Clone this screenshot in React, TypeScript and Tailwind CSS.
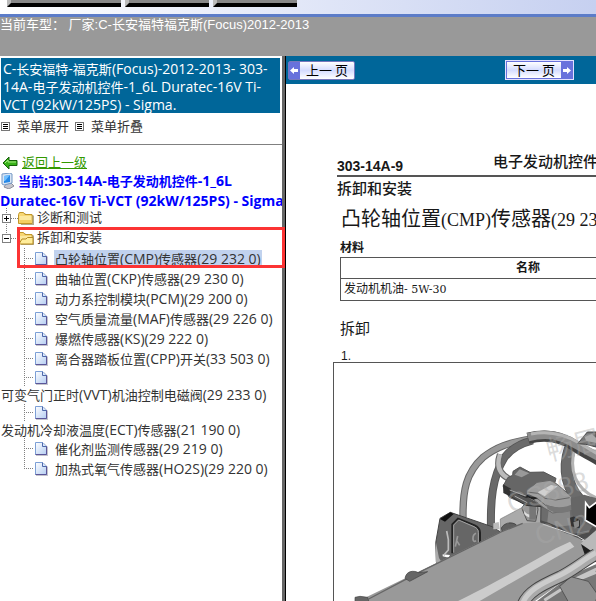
import React from "react";

const pageFont = "font-['Open_Sans','Noto_Sans_CJK_SC',sans-serif]";

/* Sets the Latin runs of a Chinese label in their own size. */
function Mixed({ text, latin = "text-[14px]" }: { text: string; latin?: string }) {
  return (
    <span>
      {text.split(/([ -~]+)/).map((run, i) =>
        i % 2 === 1 ? (
          <span key={i} className={latin}>
            {run}
          </span>
        ) : (
          run
        ),
      )}
    </span>
  );
}

function PageIcon() {
  return (
    <svg width="16" height="16" viewBox="0 0 16 16" className="shrink-0" aria-hidden="true">
      <defs>
        <linearGradient id="paper" x1="0" y1="0" x2="1" y2="1">
          <stop offset="0" stopColor="#ffffff" />
          <stop offset="1" stopColor="#b4cdf2" />
        </linearGradient>
      </defs>
      <path d="M2 3h8l4 4v9H2z" fill="#c4c4cc" />
      <path d="M1.500 2.500h7l4 4v8h-11z" fill="url(#paper)" stroke="#7c9fd6" />
      <path d="M1.500 14.500h11V6" fill="none" stroke="#5a5598" />
      <path d="M8.500 2.500v4h4" fill="#dbe8fb" stroke="#4e69aa" />
    </svg>
  );
}

function FolderIcon({ open = false }: { open?: boolean }) {
  return (
    <svg width="16" height="16" viewBox="0 0 16 16" className="shrink-0" aria-hidden="true">
      <path d="M2 5l1-2h4l1.500 2H15l1 1v9H3z" fill="#b5aa8a" />
      <path d="M.5 13.500v-9l1-2h4l1.500 2h7v9z" fill="#f7d774" stroke="#c29728" />
      <path d="M1.500 6h12v7h-12z" fill="#fce9a0" />
      {open ? (
        <path d="M1 14L4 9h4l1.500-1.500H15V14z" fill="#ffed9b" stroke="#b58a20" />
      ) : (
        <path d="M1.500 10h12v3h-12z" fill="#f4cf63" />
      )}
    </svg>
  );
}

function ListIcon() {
  return (
    <svg width="9" height="9" viewBox="0 0 9 9" className="shrink-0" aria-hidden="true" shapeRendering="crispEdges">
      <path d="M.5.5h8v8h-8z" fill="#fff" stroke="#777" />
      <path d="M2 2.500h5M2 4.500h5M2 6.500h5" stroke="#000" />
    </svg>
  );
}

function Expander({ open }: { open?: boolean }) {
  return (
    <svg width="18" height="20" viewBox="0 0 18 20" className="shrink-0" aria-hidden="true" shapeRendering="crispEdges">
      <path d={open ? "M6.500 0v6" : "M6.500 0v20"} stroke="#808080" strokeDasharray="1 1" />
      <path d="M11 10.500h7" stroke="#808080" strokeDasharray="1 1" />
      <path d="M2.500 6.500h8v8h-8z" fill="#fff" stroke="#808080" />
      <path d={open ? "M4 10.500h5" : "M4 10.500h5M6.500 8v5"} stroke="#000" />
    </svg>
  );
}

function Branch({ last = false }: { last?: boolean }) {
  return (
    <svg width="10" height="20" viewBox="0 0 10 20" className="ml-6 shrink-0" aria-hidden="true" shapeRendering="crispEdges">
      <path d={last ? "M.5 0v10" : "M.5 0v20"} stroke="#808080" strokeDasharray="1 1" />
      <path d="M0 10.500h10" stroke="#808080" strokeDasharray="1 1" />
    </svg>
  );
}

function Leaf({ label, selected, last }: { label: string; selected?: boolean; last?: boolean }) {
  return (
    <li className="flex h-5 items-center">
      <Branch last={last} />
      <PageIcon />
      <a
        href="#"
        className={selected ? "ml-1 h-[17px] bg-[#c1d2ee] px-px leading-[17px]" : "ml-1 h-[17px] px-px leading-[17px]"}
      >
        <Mixed text={label} />
      </a>
    </li>
  );
}

function WrappedLeaf({ label }: { label: string }) {
  return (
    <li>
      <a href="#" className="block">
        <span className="flex h-[18px] items-center overflow-hidden">
          <Branch />
          <PageIcon />
        </span>
        <span className="block h-[17px] pl-px leading-[17px]">
          <Mixed text={label} />
        </span>
      </a>
    </li>
  );
}

function Sidebar() {
  return (
    <aside className={`w-[282px] shrink-0 bg-white text-[13px] whitespace-nowrap text-[#333] ${pageFont}`}>
      <h1 className="mt-0.5 mr-0.5 ml-px h-[55px] bg-[#006699] pt-0.5 pl-0.5 leading-[17px] text-white">
        <Mixed text="C-长安福特-福克斯(Focus)-2012-2013- 303-" />
        <br />
        <Mixed text="14A-电子发动机控件-1_6L Duratec-16V Ti-" />
        <br />
        <Mixed text="VCT (92kW/125PS) - Sigma." />
      </h1>
      <div className="flex h-8 items-center border-b border-[#808080] pb-1 pl-px">
        <button type="button" className="flex items-center gap-[7px]">
          <ListIcon />
          菜单展开
        </button>
        <button type="button" className="ml-1.5 flex items-center gap-[7px]">
          <ListIcon />
          菜单折叠
        </button>
      </div>
      <a href="#" className="mt-2.5 flex h-4 items-center gap-1 pl-0.5 text-[#339900]">
        <svg width="16" height="14" viewBox="0 0 16 14" aria-hidden="true">
          <path d="M1 7l6-6v3.500h8v5H7V13z" fill="#38b219" stroke="#145e08" />
          <path d="M3 7l3-3v2h8" fill="none" stroke="#a8ea82" />
        </svg>
        <span className="underline">返回上一级</span>
      </a>
      <p className="font-bold leading-5 text-[#0000ff]">
        <span className="flex h-5 items-center gap-0.5">
          <svg width="16" height="16" viewBox="0 0 16 16" aria-hidden="true">
            <path d="M6 11l5-1 3 3-5 3-5-2z" fill="#c5c4cc" stroke="#8e8e9b" />
            <path d="M2 1l8-1 2 1v9l-8 2-2-1z" fill="#d8e5f4" stroke="#7497c4" />
            <path d="M4 3l6-1v7l-6 1z" fill="#2588e8" />
            <path d="M4 3l6-1-5 6H4z" fill="#73c0ff" />
          </svg>
          <Mixed text="当前:303-14A-电子发动机控件-1_6L" />
        </span>
        <Mixed text="Duratec-16V Ti-VCT (92kW/125PS) - Sigma" />
      </p>
      <ul className="-mt-[3px]">
        <li className="flex h-5 items-center">
          <Expander />
          <FolderIcon />
          <a href="#" className="ml-[3px]">诊断和测试</a>
        </li>
        <li>
          <div className="relative">
            <div className="flex h-5 items-center">
              <Expander open />
              <FolderIcon open />
              <a href="#" className="ml-[3px]">拆卸和安装</a>
            </div>
            <ul>
              <Leaf label="凸轮轴位置(CMP)传感器(29 232 0)" selected />
            </ul>
            <div className="pointer-events-none absolute -top-px -right-[3px] bottom-0 left-[17px] z-10 border-3 border-[#fc3434]" />
          </div>
          <ul>
            <Leaf label="曲轴位置(CKP)传感器(29 230 0)" />
            <Leaf label="动力系控制模块(PCM)(29 200 0)" />
            <Leaf label="空气质量流量(MAF)传感器(29 226 0)" />
            <Leaf label="爆燃传感器(KS)(29 222 0)" />
            <Leaf label="离合器踏板位置(CPP)开关(33 503 0)" />
            <WrappedLeaf label="可变气门正时(VVT)机油控制电磁阀(29 233 0)" />
            <WrappedLeaf label="发动机冷却液温度(ECT)传感器(21 190 0)" />
            <Leaf label="催化剂监测传感器(29 219 0)" />
            <Leaf label="加热式氧气传感器(HO2S)(29 220 0)" last />
          </ul>
        </li>
      </ul>
    </aside>
  );
}

function PagerArrow({ back = false }: { back?: boolean }) {
  return (
    <span className="flex h-full w-[11px] items-center justify-center bg-[#6872dc]">
      <svg width="9" height="9" viewBox="0 0 9 9" aria-hidden="true">
        <path d={back ? "M0 4.500L4 1v2h4v3H4v2z" : "M9 4.500L5 1v2H1v3h4v2z"} fill="#fff" />
      </svg>
    </span>
  );
}

function EngineDrawing() {
  return (
    <svg
      width="262"
      height="239"
      viewBox="24 6 786 717"
      className="block shrink-0"
      role="img"
      aria-label="凸轮轴位置传感器"
    >
      {/* hoses at the back */}
      <g fill="none">
        <path d="M411 470C410 390 420 335 470 290C510 258 550 244 615 234" stroke="#666" strokeWidth="22" />
        <path d="M411 470C410 390 420 335 470 290C510 258 550 244 615 234" stroke="#999" strokeWidth="16" />
        <path d="M495 505C493 420 498 350 535 290C555 262 580 248 620 238" stroke="#555" strokeWidth="24" />
        <path d="M495 505C493 420 498 350 535 290C555 262 580 248 620 238" stroke="#6a6a6a" strokeWidth="19" />
        <path d="M522 280C510 315 520 340 552 355" stroke="#666" strokeWidth="19" />
        <path d="M522 280C510 315 520 340 552 355" stroke="#bbb" strokeWidth="13" />
        <path d="M732 262C712 324 722 390 775 430" stroke="#555" strokeWidth="37" />
        <path d="M732 262C712 324 722 390 775 430" stroke="#6b6b6b" strokeWidth="32" />
        <path d="M746 264C728 330 750 385 810 410" stroke="#b4b4b4" strokeWidth="9" />
        <path d="M606 232C670 215 720 235 752 258C785 280 810 290 830 305" stroke="#444" strokeWidth="34" />
        <path d="M606 229C670 210 720 230 752 252C785 272 810 280 830 296" stroke="#8c8c8c" strokeWidth="25" />
        <path d="M615 219C675 207 720 222 760 246L830 288" stroke="#b5b5b5" strokeWidth="9" />
      </g>
      <path d="M770 230l14-17h26v45l-30-8-25-2z" fill="#777" stroke="#444" strokeWidth="3" />
      <path d="M776 228l22-9 12 12v15l-30-7z" fill="#aaa" />

      {/* bracket on the left */}
      <path d="M332 612l-3-66 13-74 31-18 125 43 24 15-42 54-118 44z" fill="#666" stroke="#444" strokeWidth="3" />
      <path d="M342 474l31-20 10 5-26 23z" fill="#111" />
      <path d="M379 577v-87l17-17 50 20c11 5 16 11 16 22v31" fill="none" stroke="#222" strokeWidth="6" />
      <path d="M383 575v-83l15-15 46 20c9 4 13 9 13 18v31" fill="none" stroke="#a2a2a2" strokeWidth="3" />
      <path d="M350 580l22 2-4 8-18-4z" fill="#fff" />
      <path d="M362 510l5 26v31l-14 16" fill="none" stroke="#bbb" strokeWidth="5" />
      <path d="M395 525l-7 32m4-18l9 14M450 517c-13 5-11 32 0 22" fill="none" stroke="#999" strokeWidth="5" />
      <path d="M329 540v62l10 12 10-7-10-16z" fill="#aaa" />

      {/* platform behind the cover */}
      <path d="M523 474l78-41 80 3 40 46-21 46-177-17z" fill="#aaa" stroke="#777" strokeWidth="2" />
      <path d="M502 505v-18l16-4 3 22" fill="#bbb" />
      <path d="M526 501c10-20 43-20 49-3l-10 16h-36z" fill="#606060" stroke="#333" strokeWidth="2" />
      <path d="M588 443c1-22 49-23 48 3l-7 35-26-2z" fill="#999" stroke="#555" strokeWidth="3" />
      <path d="M594 449c10 15 24 15 37-1v14c-14 11-26 9-36-2z" fill="#ddd" />
      <path d="M610 432h20v44h-20z" fill="#777" />
      <path d="M645 430l90 4 74 58-10 48-110-14-45-28z" fill="#6c6c6c" stroke="#444" strokeWidth="3" />
      <path d="M644 478l47 15 45 26 53-7 21-32v42l-73 23-93-50z" fill="#4c4c4c" />
      <path d="M668 446h63l4 47-39 4-32-14z" fill="#898989" />
      <path d="M732 470l30-10v42l-27-6z" fill="#333" />
      <path d="M742 484l17-6v18l-13 7z" fill="#888" />

      {/* cylinder head cover */}
      <path d="M84 723l38-15 162-79 240-117 66-25 51-3 120 49 40 28 2 35-180 127z" fill="#999" />
      <path d="M128 714l157-83 240-118 65-26" fill="none" stroke="#666" strokeWidth="4" />
      <path d="M650 489l104 36 45 27" fill="none" stroke="#ddd" strokeWidth="3" />
      <path d="M390 723c80-38 203-106 300-161l42-20 13 15-289 166z" fill="#ccc" />
      <path d="M237 652c4-24 27-24 40-17l28-3-54 29zM87 723v-14l15-3 23 3 4 14z" fill="#666" stroke="#444" strokeWidth="2" />

      {/* sensor with its connector */}
      <path d="M531 375l15-26 14-6 1-12 21-13 30 16 41-1 37 19-6 23-76 59-58-25-12-20z" fill="#666" stroke="#555" strokeWidth="3" />
      <path d="M566 341l15-16 29 12-23 12z" fill="#999" />
      <path d="M531 370l24 13-5 22-18-9z" fill="#333" />
      <path d="M553 388l47 22 90-22-32 50-59-5-49-29z" fill="#555" stroke="#333" strokeWidth="3" />
      <path d="M551 387l54 20 28 16m-67-18l38 20" fill="none" stroke="#aaa" strokeWidth="3" />
      <path d="M602 389l31-25 39-6 22 12 41 36 13 24-11 18-57 8-29-17-49-40z" fill="#9c9c9c" stroke="#666" strokeWidth="3" />
      <path d="M635 394l40-22 20 4-39 30z" fill="#d0d0d0" />
      <path d="M604 393l31 4 22 15 32 5 42-7m-125-3l30 7 24 20 42 9 40-3" fill="none" stroke="#666" strokeWidth="3" />
      <path d="M660 430c20 12 63 13 85-5l-4 19c-24 15-53 16-76 0z" fill="#777" />
      <path d="M608 400l28 12-14 4-25-10z" fill="#222" />

      {/* right edge: harness, black callout arrow and front pipes */}
      <path d="M734 412l40-11 36 10v91l-39-17-34-24z" fill="#666" />
      <path d="M779 425l11 15 25-19v78l-37-21z" fill="#000" stroke="#fff" strokeWidth="5" />
      <path d="M765 547l48-42v82l-37-11z" fill="#b9b9b9" />
      <path d="M765 549l45 31v24l-34-24z" fill="#1d1d1d" />
      <path d="M629 723l107-81 74-32v113z" fill="#777" />
      <path d="M655 718l90-58 65-26m-98 39l98 49m-82-58l83-40m-85 89l55-46" fill="none" stroke="#c6c6c6" strokeWidth="9" />
      <path d="M701 676l34-29 52 14 28 40-8 27h-77z" fill="#909090" stroke="#555" strokeWidth="3" />
      <path d="M589 735c13-42 60-63 114-88 40-20 65-43 107-67" fill="none" stroke="#444" strokeWidth="37" />
      <path d="M589 735c13-42 60-63 114-88 40-20 65-43 107-67" fill="none" stroke="#aaa" strokeWidth="31" />
      <path d="M589 730c13-42 60-63 114-88 40-20 65-43 107-67" fill="none" stroke="#ccc" strokeWidth="15" />

      {/* watermark */}
      <g className="font-['Liberation_Sans','Noto_Sans_CJK_SC',sans-serif]" fill="#aaa" fillOpacity=".42" fontSize="82">
        <text transform="translate(670 300) rotate(-14)">畅居</text>
        <text transform="translate(553 457) rotate(-17)">CS888</text>
        <text transform="translate(635 552) rotate(-14)">CN2</text>
      </g>
    </svg>
  );
}

function Manual() {
  return (
    <main className="min-w-0 flex-1 overflow-hidden bg-white">
      <nav className="flex h-7 items-center bg-[#006699] pl-0.5 font-['Noto_Sans_CJK_SC',sans-serif] text-[13px] text-black">
        <button type="button" className="flex h-[19px] w-[67px] shrink-0 items-center rounded-xs border border-[#7778bc] bg-linear-to-b from-white via-[#d5dcff] to-white">
          <PagerArrow back />
          <span className="flex-1 whitespace-pre">上一 页</span>
        </button>
        <button type="button" className="ml-[150px] flex h-5 w-[69px] shrink-0 items-center border border-[#e3e1ff] bg-[#6872dc] p-px">
          <span className="flex h-full flex-1 items-center justify-center bg-linear-to-b from-white via-[#d5dcff] to-white whitespace-pre">下一 页</span>
          <PagerArrow />
        </button>
      </nav>
      <article className="w-[600px] pt-[68px] pl-[47px] font-['Liberation_Sans','Noto_Sans_CJK_SC',sans-serif] whitespace-nowrap text-[#181818]">
        <header className="ml-1 flex h-[25px] items-start justify-between border-b-2 border-[#555]">
          <span className="mt-1 w-[156px] text-[14px] leading-5 font-bold">303-14A-9</span>
          <span className="flex-1 text-[15px] leading-5 font-medium">电子发动机控件</span>
        </header>
        <p className="ml-1 text-[15px] leading-6 font-medium">拆卸和安装</p>
        <h2 className="ml-2 h-[39px] font-['Liberation_Serif','Noto_Sans_CJK_SC',serif] text-[20px] leading-9">
          <Mixed text="凸轮轴位置(CMP)传感器(29 232 0)" latin="text-[18px]" />
        </h2>
        <h3 className="ml-[7px] text-[12px] leading-[17px] font-bold">材料</h3>
        <table className="ml-[7px] w-[376px] table-fixed border-collapse text-[12px] leading-5">
          <thead>
            <tr>
              <th className="h-[21px] border border-[#555] p-0 font-bold">名称</th>
            </tr>
          </thead>
          <tbody>
            <tr>
              <td className="h-[21px] border border-[#555] px-[3px] py-0">
                <span className="font-['DejaVu_Serif','Noto_Sans_CJK_SC',serif]">
                  <Mixed text="发动机机油- 5W-30" latin="text-[11px]" />
                </span>
              </td>
            </tr>
          </tbody>
        </table>
        <h3 className="mt-[18px] ml-[7px] text-[15px] leading-5">拆卸</h3>
        <p className="mt-2 ml-2 h-[15px] text-[12px] leading-[18px]">1.</p>
        <figure className="flex border-t border-l border-[#555]">
          <EngineDrawing />
        </figure>
      </article>
    </main>
  );
}

export default function App() {
  return (
    <div className="flex h-screen flex-col overflow-hidden bg-[#999]">
      <div className="flex h-[17px] shrink-0 items-start gap-1 border-b-3 border-[#5c7cc8] bg-linear-to-r from-white to-[#c6d0f0] pl-[7px]">
        <button type="button" aria-label="返回" className="h-[7px] w-[114px] border-b-4 border-l-4 border-black border-l-[#bbb] bg-[#888]" />
        <button type="button" aria-label="首页" className="h-[7px] w-[84px] border-b-4 border-l-4 border-black border-l-[#bbb] bg-[#888]" />
        <button type="button" aria-label="退出" className="h-[7px] w-[84px] border-b-4 border-l-4 border-black border-l-[#bbb] bg-[#888]" />
      </div>
      <div className="h-[39px] shrink-0 font-['Liberation_Sans','Noto_Sans_CJK_SC',sans-serif] text-[13px] leading-[15px] whitespace-pre text-white">
        当前车型： 厂家:C-长安福特福克斯(Focus)2012-2013
      </div>
      <div className="flex min-h-0 flex-1">
        <Sidebar />
        <div className="w-1 shrink-0 border-r border-black bg-[#666]" />
        <Manual />
      </div>
    </div>
  );
}
